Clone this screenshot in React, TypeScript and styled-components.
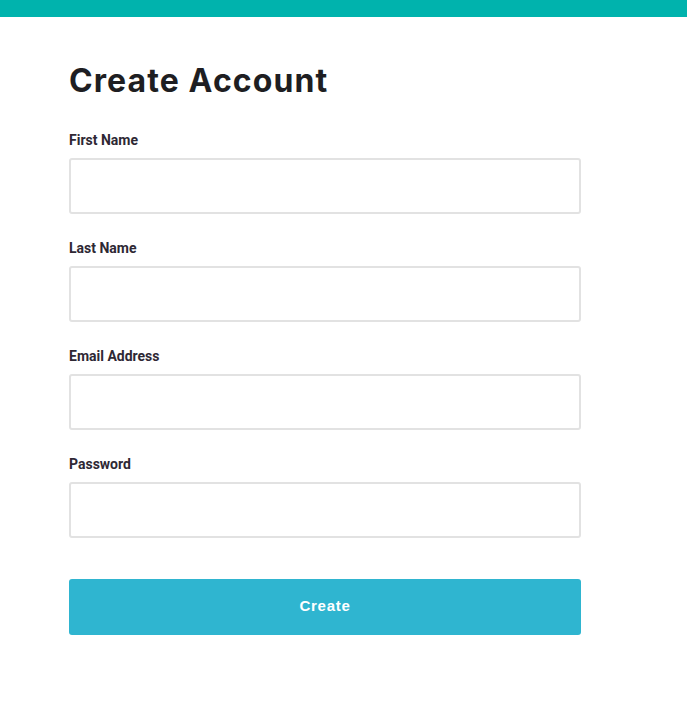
import React from 'react';
import styled, { createGlobalStyle } from 'styled-components';

const GlobalStyle = createGlobalStyle`
  body {
    margin: 0;
    background: #ffffff;
    font-family: Roboto, "Liberation Sans", sans-serif;
  }
`;

const TopBar = styled.div`
  height: 17px;
  background: #00b3ad;
`;

const Page = styled.div`
  padding: 44px 0 60px 69px;
`;

const Title = styled.h1`
  margin: 0 0 30px 0;
  font-family: Inter, "Liberation Sans", sans-serif;
  font-size: 32px;
  font-weight: 700;
  letter-spacing: 1.1px;
  color: #1e1e22;
  line-height: 40px;
`;

const Form = styled.form`
  width: 512px;
  display: flex;
  flex-direction: column;
`;

const Field = styled.div`
  display: flex;
  flex-direction: column;
  margin-bottom: 25px;
`;

const Label = styled.label`
  font-size: 14px;
  font-weight: 700;
  color: #2e2834;
  line-height: 18px;
  margin-bottom: 9px;
`;

const Input = styled.input`
  box-sizing: border-box;
  height: 56px;
  width: 100%;
  border: 2px solid #e2e2e2;
  border-radius: 3px;
  padding: 0 14px;
  font-size: 15px;
  outline: none;
`;

const Button = styled.button`
  margin-top: 16px;
  height: 56px;
  padding: 0 0 4px 0;
  border: none;
  border-radius: 3px;
  background: #2fb5d0;
  color: #ffffff;
  font-family: "Liberation Sans", Arial, sans-serif;
  font-size: 15px;
  font-weight: 700;
  letter-spacing: 0.7px;
  cursor: pointer;
`;

const fields = [
  { id: 'first', label: 'First Name', type: 'text' },
  { id: 'last', label: 'Last Name', type: 'text' },
  { id: 'email', label: 'Email Address', type: 'email' },
  { id: 'password', label: 'Password', type: 'password' },
];

const App = () => {
  return (
    <>
      <GlobalStyle />
      <TopBar />
      <Page>
        <Title>Create Account</Title>
        <Form onSubmit={(e) => e.preventDefault()}>
          {fields.map((f) => (
            <Field key={f.id}>
              <Label htmlFor={f.id}>{f.label}</Label>
              <Input id={f.id} type={f.type} />
            </Field>
          ))}
          <Button type="submit">Create</Button>
        </Form>
      </Page>
    </>
  );
};

export default App;
